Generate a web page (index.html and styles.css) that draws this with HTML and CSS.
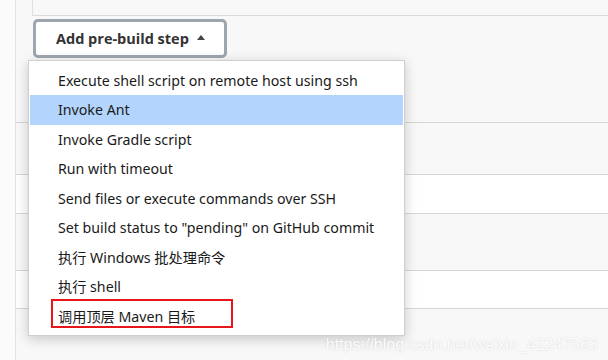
FILE: index.html
```html
<html>
    <head>
        <meta charset="utf-8" />
        <title>Build steps</title>
        <link rel="stylesheet" href="styles.css">
    </head>
    <body>
        <div class="page">
            <div class="section">
                <div class="top-box"></div>
                <div class="step-bar">
                    <button class="add-btn">Add pre-build step <span class="caret"></span></button>
                </div>
                <div class="rows">
                    <div class="row row-a"></div>
                    <div class="row row-b"></div>
                    <div class="row row-c"></div>
                    <div class="row row-d"></div>
                    <div class="row row-e"></div>
                </div>

                <ul class="menu">
                    <li class="item">Execute shell script on remote host using ssh</li>
                    <li class="item active">Invoke Ant</li>
                    <li class="item">Invoke Gradle script</li>
                    <li class="item">Run with timeout</li>
                    <li class="item">Send files or execute commands over SSH</li>
                    <li class="item">Set build status to "pending" on GitHub commit</li>
                    <li class="item">执行 Windows 批处理命令</li>
                    <li class="item">执行 shell</li>
                    <li class="item marked">调用顶层 Maven 目标<span class="mark"></span></li>
                </ul>
            </div>
        </div>
        <div class="watermark">https://blog.csdn.net/weixin_42247563</div>
    </body>
</html>
```

FILE: styles.css
```css
body,html {
    margin: 0;
    padding: 0;
    height: 100%;
    overflow: hidden;
    font-family: "Noto Sans", "Open Sans", "Noto Sans CJK SC", sans-serif;
    background: #fbfbfb;
}

.page {
    margin-left: 15px;
    height: 100%;
    border-left: 1px solid #e2e2e2;
    background: #f8f8f8;
}

.section {
    position: relative;
    height: 100%;
}

.top-box {
    margin-left: 16px;
    height: 15px;
    border-left: 1px solid #e0e0e0;
    border-bottom: 1px solid #dcdcdc;
    background: #f8f8f8;
}

.step-bar {
    padding: 3px 0 0 17px;
}

.add-btn {
    display: flex;
    align-items: center;
    gap: 8px;
    width: 194px;
    height: 39px;
    padding: 0 0 0 20px;
    border: 3px solid #9da6ae;
    border-radius: 5px;
    background: #fff;
    color: #333;
    font-family: "Open Sans", "Noto Sans", sans-serif;
    font-size: 14.5px;
    font-weight: bold;
}

.caret {
    width: 0;
    height: 0;
    border-left: 4.5px solid transparent;
    border-right: 4.5px solid transparent;
    border-bottom: 5px solid #444;
    margin-top: -2px;
}

.rows {
    margin-top: 64px;
}

.row {
    border-top: 1px solid #d6d6d6;
}

.row-a { height: 51px; background: #f8f8f8; }
.row-b { height: 38px; background: #fff; }
.row-c { height: 56px; background: #f8f8f8; }
.row-d { height: 37px; background: #fff; }
.row-e { height: 60px; background: #f8f8f8; }

.menu {
    position: absolute;
    left: 12px;
    top: 60px;
    width: 375px;
    margin: 0;
    padding: 4.5px 0 4px;
    list-style: none;
    background: #fff;
    border: 1px solid #cfcfcf;
    box-shadow: 0 3px 12px rgba(0,0,0,0.2);
}

.item {
    position: relative;
    height: 29.5px;
    line-height: 29.5px;
    margin: 0 1px;
    padding-left: 28px;
    font-size: 14.2px;
    color: #1a1a1a;
    white-space: nowrap;
}

.active {
    background: #b3d4fc;
}

.mark {
    position: absolute;
    left: 21px;
    top: -2.5px;
    width: 178px;
    height: 25px;
    border: 2px solid #e8161b;
}

.watermark {
    position: absolute;
    right: 10px;
    bottom: 6px;
    font-family: "Liberation Sans", sans-serif;
    font-size: 16px;
    color: #fcfcfc;
    text-shadow: 0 0 2px rgba(0,0,0,0.15);
}
```
